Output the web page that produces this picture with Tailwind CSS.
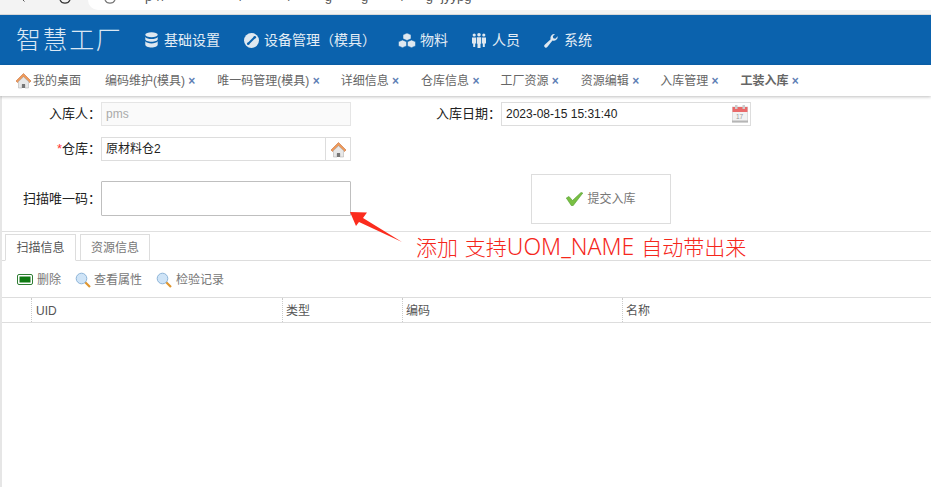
<!DOCTYPE html>
<html lang="zh">
<head>
<meta charset="utf-8">
<script src="https://cdn.jsdelivr.net/npm/@tailwindcss/browser@4"></script>
</head>
<body class="relative w-[931px] h-[487px] overflow-hidden bg-white font-['Liberation_Sans','Noto_Sans_CJK_SC',sans-serif] text-[12px] text-[#333]">

<!-- browser chrome sliver -->
<div class="h-[15px] bg-[#f3f3f3] border-b border-[#d8d8d8] flex overflow-hidden">
  <div class="w-[88px] flex items-start">
    <svg class="ml-[22px]" width="4" height="2" viewBox="0 0 4 2"><path d="M1 0l1.500 1.500" fill="none" stroke="#555"/></svg>
    <svg class="ml-[33px]" width="12" height="4" viewBox="0 0 12 4"><path d="M1 0a5.500 5.500 0 0 0 10 0" fill="none" stroke="#333" stroke-width="1.200"/></svg>
  </div>
  <div class="flex-1 h-[10px] bg-white rounded-bl-[10px] flex items-start overflow-hidden">
    <svg class="ml-[16px]" width="12" height="4" viewBox="0 0 12 4"><path d="M1 0a5.500 5.500 0 0 0 10 0" fill="none" stroke="#777" stroke-width="1.200"/></svg>
    <div class="ml-[29px] -mt-[10px] flex text-[13px] leading-[13px] text-[#555]">
      <span>p</span><span class="ml-[5px]">/</span><span class="ml-[1px]">/</span>
      <span class="ml-[74px]">/</span><span class="ml-[45px]">/</span><span class="ml-[33px]">g</span><span class="ml-[29px]">g</span><span class="ml-[33px]">/</span><span class="ml-[21px]">g</span><span class="ml-[8px]">jyypg</span>
    </div>
  </div>
</div>

<!-- header -->
<header class="h-[50px] bg-[#0b62ad] flex items-center text-[#e4edf5]">
  <div class="ml-[16px] w-[112px] text-[25px] leading-none tracking-[1.6px] font-extralight text-[#dbe8f4] whitespace-nowrap">智慧工厂</div>
  <nav class="flex items-center text-[14px]">
    <a class="ml-[17px] flex items-center gap-[6px]">
      <svg width="13" height="16" viewBox="0 0 13 16" fill="#dfe8f0"><ellipse cx="6.500" cy="2.800" rx="6.200" ry="2.500"/><path d="M.3 4.900c1 1.500 3.400 2.100 6.200 2.100s5.200-.6 6.200-2.100v2.400c0 1.400-2.800 2.500-6.200 2.500S.3 8.700.3 7.300zM.3 9.300c1 1.500 3.400 2.100 6.200 2.100s5.200-.6 6.200-2.100v3.500c0 1.500-2.800 2.700-6.200 2.700S.3 14.300.3 12.800z"/></svg>
      <span>基础设置</span>
    </a>
    <a class="ml-[24px] flex items-center gap-[5px]">
      <svg width="15" height="15" viewBox="0 0 15 15"><circle cx="7.500" cy="7.500" r="7.500" fill="#dfe8f0"/><path d="M4.500 10.500l6-6" stroke="#0b62ad" stroke-width="2"/><circle cx="4.200" cy="10.800" r="1.300" fill="#0b62ad"/><circle cx="10.800" cy="4.200" r="1.300" fill="#0b62ad"/></svg>
      <span>设备管理（模具）</span>
    </a>
    <a class="ml-[22px] flex items-center gap-[4px]">
      <svg width="18" height="15" viewBox="0 0 18 15" fill="#dfe8f0" stroke="#0b62ad" stroke-width=".5"><path d="M9 0l4 1.800v4L9 7.500 5 5.800v-4z"/><path d="M4.500 7l4 1.700v4.200l-4 1.800-4-1.800V8.700z"/><path d="M13.500 7l4 1.700v4.200l-4 1.800-4-1.800V8.700z"/></svg>
      <span>物料</span>
    </a>
    <a class="ml-[24px] flex items-center gap-[6px]">
      <svg width="14" height="15" viewBox="0 0 14 15" fill="#dfe8f0"><circle cx="2.200" cy="2" r="1.600"/><circle cx="7" cy="1.800" r="1.800"/><circle cx="11.800" cy="2" r="1.600"/><path d="M0 4.500h4v6H3.200V14H1.200v-3.500H0z"/><path d="M4.800 4.300h4.400v6.500H8.500V15h-3v-4.200h-.7z"/><path d="M10 4.500h4v6h-1.200V14h-2v-3.500H10z"/></svg>
      <span>人员</span>
    </a>
    <a class="ml-[24px] flex items-center gap-[6px]">
      <svg width="14" height="15" viewBox="0 0 14 15" fill="#dfe8f0"><path d="M13.700 3.200a4 4 0 0 1-5.200 4.300L3.300 14a1.700 1.700 0 0 1-2.600-2.200l6-5.500A4 4 0 0 1 11 1L8.800 3.200l.5 2 2 .5z"/></svg>
      <span>系统</span>
    </a>
  </nav>
</header>

<!-- tab bar -->
<div class="relative h-[31px] bg-white shadow-[0_1px_3px_rgba(0,0,0,0.25)] flex items-center text-[#666] whitespace-nowrap">
  <span class="ml-[15px] flex items-center gap-[1px]">
    <svg width="17" height="17" viewBox="0 0 17 17"><path d="M8.500 1.500L1 9l1.500 1.500 6-6 6 6L16 9z" fill="#ee9a5a" stroke="#c8703a" stroke-width=".6"/><path d="M3.500 9.500l5-4.500 5 4.500V16h-3.500v-3.500H7V16H3.500z" fill="#e8e8e8" stroke="#aaa" stroke-width=".5"/><rect x="7" y="12" width="3" height="4" fill="#777"/></svg>
    <span>我的桌面</span>
  </span>
  <span class="ml-[24px]">编码维护(模具) <i class="not-italic font-semibold text-[#5f7fb5]">×</i></span>
  <span class="ml-[22px]">唯一码管理(模具) <i class="not-italic font-semibold text-[#5f7fb5]">×</i></span>
  <span class="ml-[21px]">详细信息 <i class="not-italic font-semibold text-[#5f7fb5]">×</i></span>
  <span class="ml-[22px]">仓库信息 <i class="not-italic font-semibold text-[#5f7fb5]">×</i></span>
  <span class="ml-[21px]">工厂资源 <i class="not-italic font-semibold text-[#5f7fb5]">×</i></span>
  <span class="ml-[22px]">资源编辑 <i class="not-italic font-semibold text-[#5f7fb5]">×</i></span>
  <span class="ml-[21px]">入库管理 <i class="not-italic font-semibold text-[#5f7fb5]">×</i></span>
  <span class="ml-[22px] font-semibold">工装入库 <i class="not-italic text-[#5f7fb5]">×</i></span>
</div>

<!-- main, with a thin rail at left -->
<main class="border-l-2 border-[#e6e6e6] h-[391px]">
  <!-- form -->
  <div class="h-[135px]">
    <div class="flex pt-[6px] h-[41px]">
      <label class="w-[99px] h-[24px] flex items-center justify-end text-[13px] text-[#222]">入库人：</label>
      <div class="w-[250px] h-[24px] border border-[#e5e5e5] bg-[#fafafa] text-[#aaa] flex items-center pl-[4px]">pms</div>
      <label class="ml-[85px] w-[65px] h-[24px] flex items-center justify-end text-[13px] text-[#222]">入库日期：</label>
      <div class="w-[250px] h-[24px] border border-[#ddd] text-[#222] flex items-center justify-between pl-[4px] pr-[2px]">
        <span>2023-08-15 15:31:40</span>
        <svg width="16" height="18" viewBox="0 0 16 18"><rect x="0.500" y="2" width="15" height="15" fill="#f2f2f2" stroke="#ddd"/><rect x="0.500" y="2" width="15" height="5" fill="#e96a6a"/><rect x="3" y="0" width="2.500" height="4" fill="#ccc"/><rect x="10.500" y="0" width="2.500" height="4" fill="#ccc"/><rect x="0" y="15.500" width="16" height="2" fill="#b5b5b5"/><text x="4" y="14" font-size="6.500" fill="#999">17</text></svg>
      </div>
    </div>
    <div class="flex h-[44px]">
      <label class="w-[99px] h-[24px] flex items-center justify-end text-[13px] text-[#222]"><span class="text-[#f33]">*</span>仓库：</label>
      <div class="w-[250px] h-[24px] border border-[#ddd] text-[#222] flex items-center justify-between pl-[4px]">
        <span>原材料仓2</span>
        <span class="w-[25px] h-full border-l border-[#ddd] flex items-center justify-center">
          <svg width="17" height="17" viewBox="0 0 17 17"><path d="M8.500 1.500L1 9l1.500 1.500 6-6 6 6L16 9z" fill="#ee9a5a" stroke="#c8703a" stroke-width=".6"/><path d="M3.500 9.500l5-4.500 5 4.500V16h-3.500v-3.500H7V16H3.500z" fill="#e8e8e8" stroke="#aaa" stroke-width=".5"/><rect x="7" y="12" width="3" height="4" fill="#777"/></svg>
        </span>
      </div>
    </div>
    <div class="flex items-start">
      <label class="w-[99px] h-[35px] flex items-center justify-end text-[13px] text-[#222]">扫描唯一码：</label>
      <div class="w-[250px] h-[35px] border border-[#bfbfbf] rounded-[1px] bg-white"></div>
      <button class="ml-[180px] -mt-[7px] w-[140px] h-[50px] border border-[#ddd] text-[#777] flex items-center justify-center gap-[4px]">
        <svg width="17" height="14" viewBox="0 0 17 14"><path d="M.3 6L3 4.500 6.500 8.500 15 .5 16.800 1 7 13.800H5.500z" fill="#79c043" stroke="#4f9a2d" stroke-width=".6"/></svg>
        <span>提交入库</span>
      </button>
    </div>
  </div>

  <!-- tabs -->
  <div class="border-t border-[#e0e0e0] h-[29px] flex items-end pl-[3px] gap-[4px]">
    <div class="w-[71px] h-[27px] border border-[#ddd] border-b-white bg-white text-[#555] flex items-center justify-center relative z-10 -mb-px">扫描信息</div>
    <div class="w-[70px] h-[27px] border border-[#ddd] text-[#777] flex items-center justify-center -mb-px">资源信息</div>
  </div>
  <div class="border-t border-[#ddd] h-[37px] pt-[1px] flex items-center text-[#777]">
    <span class="ml-[15px] flex items-center gap-[4px]">
      <svg width="16" height="11" viewBox="0 0 16 11"><rect x=".5" y=".5" width="15" height="10" rx="1.500" fill="#fff" stroke="#2e7d32"/><rect x="2.500" y="2.500" width="11" height="6" fill="#0f7a13"/></svg>
      <span>删除</span>
    </span>
    <span class="ml-[14px] flex items-center gap-[3px]">
      <svg width="16" height="16" viewBox="0 0 16 16"><line x1="10" y1="10" x2="15" y2="15" stroke="#e0962f" stroke-width="2.200"/><circle cx="6.500" cy="6.500" r="5.300" fill="#cfe4f7" stroke="#8db4d8"/></svg>
      <span>查看属性</span>
    </span>
    <span class="ml-[14px] flex items-center gap-[4px]">
      <svg width="16" height="16" viewBox="0 0 16 16"><line x1="10" y1="10" x2="15" y2="15" stroke="#e0962f" stroke-width="2.200"/><circle cx="6.500" cy="6.500" r="5.300" fill="#cfe4f7" stroke="#8db4d8"/></svg>
      <span>检验记录</span>
    </span>
  </div>

  <!-- table header -->
  <div class="border-y border-[#ddd] h-[26px] flex text-[#555]">
    <div class="w-[29px] h-full"></div>
    <div class="w-[251px] h-full border-l border-dotted border-[#ccc] pl-[4px] pt-[1px] flex items-center">UID</div>
    <div class="w-[120px] h-full border-l border-dotted border-[#ccc] pl-[3px] pt-[1px] flex items-center">类型</div>
    <div class="w-[220px] h-full border-l border-dotted border-[#ccc] pl-[3px] pt-[1px] flex items-center">编码</div>
    <div class="flex-1 h-full border-l border-dotted border-[#ccc] pl-[3px] pt-[1px] flex items-center">名称</div>
  </div>
</main>

<!-- annotation laid over the page -->
<svg class="absolute left-[345px] top-[205px]" width="62" height="40" viewBox="0 0 62 40"><path d="M5 7L22 7.500L18 13L57 37L14 17L11 21z" fill="#fb2c1e"/></svg>
<div class="absolute left-[416px] top-[232px] text-[21px] font-light leading-[28px] [word-spacing:1px] text-[#f5271c] whitespace-nowrap">添加 支持<span class="font-['Noto_Sans'] text-[23px]">UOM_NAME</span> 自动带出来</div>

</body>
</html>
